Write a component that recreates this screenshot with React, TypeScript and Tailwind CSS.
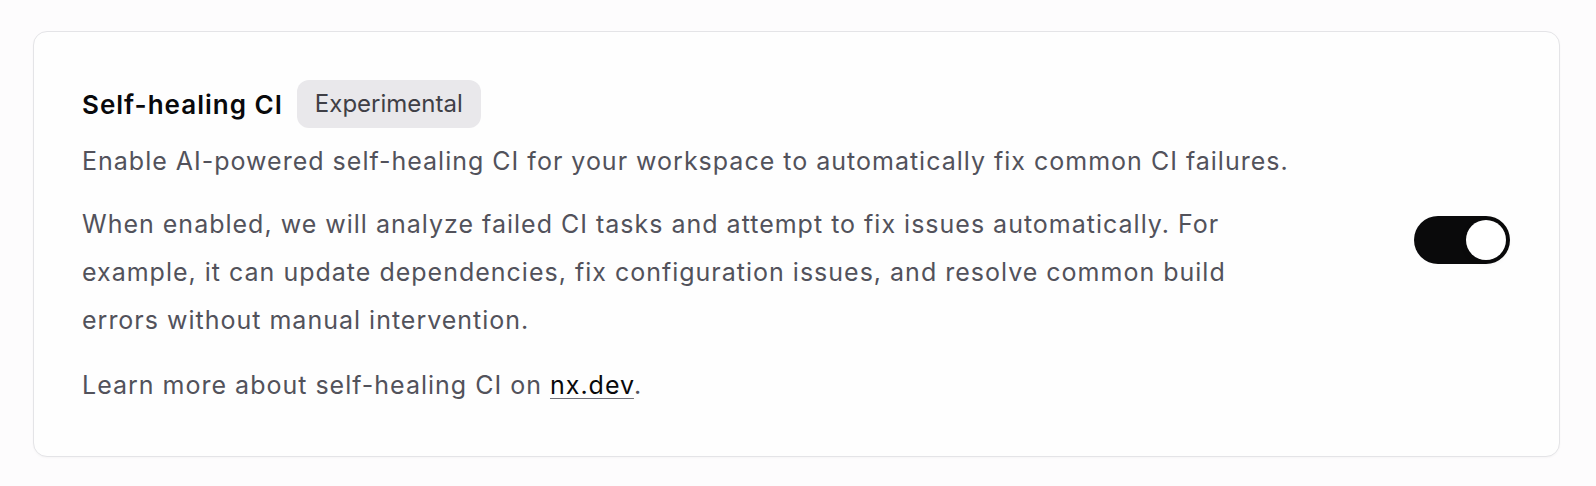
import React, { useState } from "react";

export default function App() {
  const [enabled, setEnabled] = useState(true);

  return (
    <div className="min-h-[486px] w-full bg-[#fdfcfd] pt-[31px] pl-[33px] font-['Inter',sans-serif]">
      <div className="flex w-[1527px] items-center justify-between rounded-[14px] border border-[#e4e4e7] bg-[#fefefe] px-[48px] pt-[48px] pb-[47px] shadow-[0_1px_2px_rgba(0,0,0,0.03)]">
        <div className="w-[1236px]">
          <div className="flex h-[48px] items-center gap-[14px]">
            <h3 className="text-[26px] font-semibold tracking-[1px] text-[#09090b]">Self-healing CI</h3>
            <span className="flex h-[48px] items-center rounded-[12px] bg-[#e9e8eb] px-[18px] text-[24px] font-normal text-[#3f3f46]">
              Experimental
            </span>
          </div>
          <p className="mt-[9px] text-[25px] leading-[48px] tracking-[1px] text-[#52525b]">
            Enable AI-powered self-healing CI for your workspace to automatically fix common CI failures.
          </p>
          <p className="mt-[15px] w-[1200px] text-[25px] leading-[48px] tracking-[1px] text-[#52525b]">
            When enabled, we will analyze failed CI tasks and attempt to fix issues automatically. For example, it can
            update dependencies, fix configuration issues, and resolve common build errors without manual intervention.
          </p>
          <p className="mt-[17px] text-[25px] leading-[48px] tracking-[1px] text-[#52525b]">
            Learn more about self-healing CI on{" "}
            <a
              href="#"
              className="text-[#09090b] underline decoration-[#71717a] decoration-1 underline-offset-[4px]"
            >
              nx.dev
            </a>
            .
          </p>
        </div>
        <button
          onClick={() => setEnabled(!enabled)}
          className={`relative mr-[1px] mb-[10px] flex h-[48px] w-[96px] shrink-0 items-center rounded-full p-[4px] ${
            enabled ? "justify-end bg-[#0a0a0b]" : "justify-start bg-[#e4e4e7]"
          }`}
        >
          <span className="block h-[40px] w-[40px] rounded-full bg-white shadow-[0_2px_6px_rgba(0,0,0,0.12)]" />
        </button>
      </div>
    </div>
  );
}
